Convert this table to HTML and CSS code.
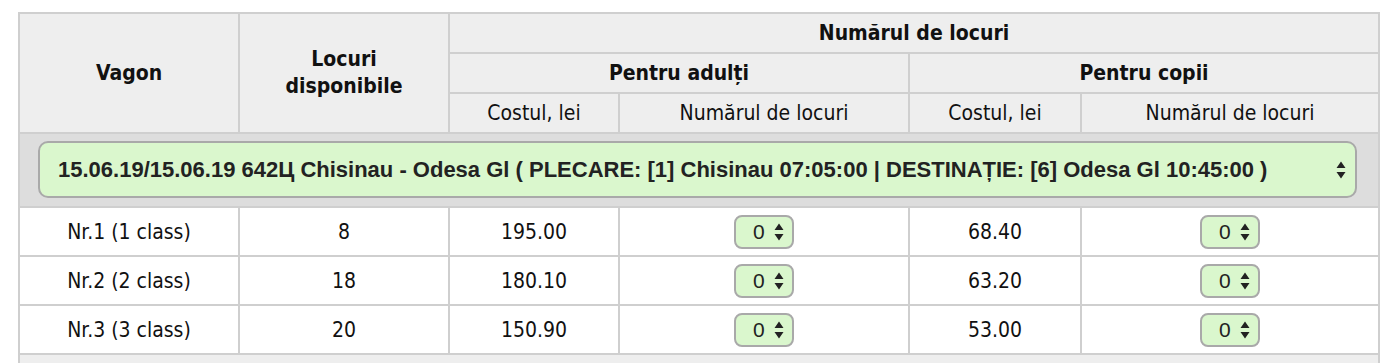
FILE: index.html
```html
<!DOCTYPE html>
<html lang="ro">
<head>
<meta charset="utf-8">
<title>Locuri</title>
<link rel="stylesheet" href="styles.css">
</head>
<body>
<div class="page">
<table class="seats">
  <colgroup>
    <col class="c1"><col class="c2"><col class="c3"><col class="c4"><col class="c5"><col class="c6">
  </colgroup>
  <thead>
    <tr>
      <th rowspan="3" class="big">Vagon</th>
      <th rowspan="3" class="big">Locuri<br>disponibile</th>
      <th colspan="4">Numărul de locuri</th>
    </tr>
    <tr>
      <th colspan="2">Pentru adulți</th>
      <th colspan="2">Pentru copii</th>
    </tr>
    <tr>
      <th class="sub">Costul, lei</th>
      <th class="sub">Numărul de locuri</th>
      <th class="sub">Costul, lei</th>
      <th class="sub">Numărul de locuri</th>
    </tr>
  </thead>
  <tbody>
    <tr class="train-row">
      <td colspan="6">
        <div class="train-select">
          <span class="train-text">15.06.19/15.06.19 642Ц Chisinau - Odesa Gl ( PLECARE: [1] Chisinau 07:05:00 | DESTINAȚIE: [6] Odesa Gl 10:45:00 )</span>
          <svg class="arrows" width="10" height="20" viewBox="0 0 10 20"><path d="M5 1.5 L9.5 8 L0.5 8 Z M0.5 12 L9.5 12 L5 18.5 Z" fill="#222"/></svg>
        </div>
      </td>
    </tr>
    <tr class="data">
      <td>Nr.1 (1 class)</td><td>8</td><td>195.00</td>
      <td><div class="num-select"><span>0</span><svg class="arrows" width="10" height="20" viewBox="0 0 10 20"><path d="M5 1.5 L9.5 8 L0.5 8 Z M0.5 12 L9.5 12 L5 18.5 Z" fill="#222"/></svg></div></td>
      <td>68.40</td>
      <td><div class="num-select"><span>0</span><svg class="arrows" width="10" height="20" viewBox="0 0 10 20"><path d="M5 1.5 L9.5 8 L0.5 8 Z M0.5 12 L9.5 12 L5 18.5 Z" fill="#222"/></svg></div></td>
    </tr>
    <tr class="data">
      <td>Nr.2 (2 class)</td><td>18</td><td>180.10</td>
      <td><div class="num-select"><span>0</span><svg class="arrows" width="10" height="20" viewBox="0 0 10 20"><path d="M5 1.5 L9.5 8 L0.5 8 Z M0.5 12 L9.5 12 L5 18.5 Z" fill="#222"/></svg></div></td>
      <td>63.20</td>
      <td><div class="num-select"><span>0</span><svg class="arrows" width="10" height="20" viewBox="0 0 10 20"><path d="M5 1.5 L9.5 8 L0.5 8 Z M0.5 12 L9.5 12 L5 18.5 Z" fill="#222"/></svg></div></td>
    </tr>
    <tr class="data">
      <td>Nr.3 (3 class)</td><td>20</td><td>150.90</td>
      <td><div class="num-select"><span>0</span><svg class="arrows" width="10" height="20" viewBox="0 0 10 20"><path d="M5 1.5 L9.5 8 L0.5 8 Z M0.5 12 L9.5 12 L5 18.5 Z" fill="#222"/></svg></div></td>
      <td>53.00</td>
      <td><div class="num-select"><span>0</span><svg class="arrows" width="10" height="20" viewBox="0 0 10 20"><path d="M5 1.5 L9.5 8 L0.5 8 Z M0.5 12 L9.5 12 L5 18.5 Z" fill="#222"/></svg></div></td>
    </tr>
    <tr class="footer-row">
      <td colspan="6"></td>
    </tr>
  </tbody>
</table>
</div>
</body>
</html>
```

FILE: styles.css
```css
html, body {
  margin: 0;
  padding: 0;
  background: #ffffff;
}

.page {
  padding: 12px 10px 0 18px;
}

.seats {
  border-collapse: separate;
  border-spacing: 0;
  table-layout: fixed;
  width: 1362px;
  border-top: 2px solid #cfcfcf;
  border-left: 2px solid #cfcfcf;
  font-family: "DejaVu Sans Condensed", "DejaVu Sans", sans-serif;
  font-size: 21px;
  color: #111;
}

.c1 { width: 220px; }
.c2 { width: 210px; }
.c3 { width: 170px; }
.c4 { width: 290px; }
.c5 { width: 172px; }
.c6 { width: 298px; }

.seats th,
.seats td {
  border-right: 2px solid #cfcfcf;
  border-bottom: 2px solid #cfcfcf;
  text-align: center;
  vertical-align: middle;
  padding: 0;
}

.seats th {
  background: #eeeeee;
  font-weight: bold;
  height: 38px;
  line-height: 26px;
}

.seats th.sub {
  font-weight: normal;
}

.seats th.big {
  line-height: 27px;
}

.train-row td {
  background: #dddddd;
  padding: 7px 21px 8px 18px;
}

.train-select {
  display: flex;
  align-items: center;
  justify-content: space-between;
  height: 53px;
  padding: 0 9px 0 18px;
  background: #daf7cd;
  border: 2px solid #a9a9a9;
  border-radius: 10px;
  font-family: "Liberation Sans", Arial, sans-serif;
  font-weight: bold;
  font-size: 22px;
  color: #222;
}

.data td {
  background: #ffffff;
  height: 47px;
}

.num-select {
  display: inline-flex;
  align-items: center;
  gap: 9px;
  box-sizing: border-box;
  width: 60px;
  height: 34px;
  padding: 0 8px 0 17px;
  background: #daf7cd;
  border: 2px solid #a9a9a9;
  border-radius: 8px;
  font-family: "Liberation Sans", Arial, sans-serif;
  font-size: 21px;
  color: #222;
  vertical-align: middle;
}

.arrows {
  display: block;
  flex: none;
}

.footer-row td {
  background: #eeeeee;
  height: 8px;
  border-bottom: none;
}
```
